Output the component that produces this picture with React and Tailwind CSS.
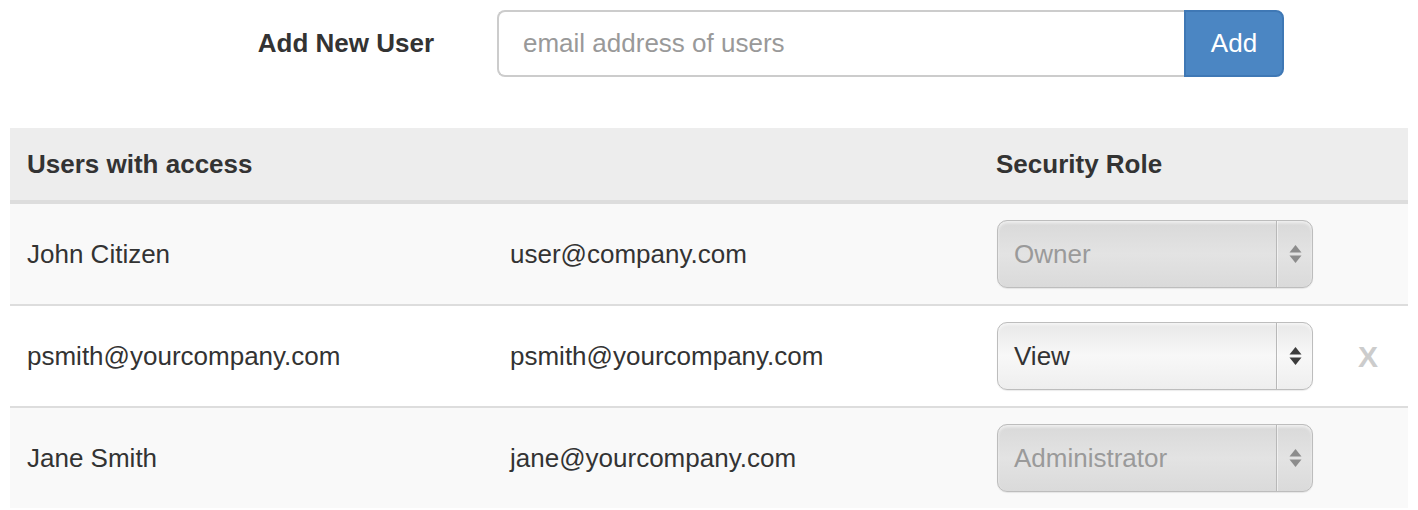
import React from 'react';

const users = [
    { name: 'John Citizen', email: 'user@company.com', role: 'Owner', disabled: true, striped: true },
    { name: 'psmith@yourcompany.com', email: 'psmith@yourcompany.com', role: 'View', disabled: false, striped: false, removable: true },
    { name: 'Jane Smith', email: 'jane@yourcompany.com', role: 'Administrator', disabled: true, striped: true },
];

// Aqua-ish select box, drawn by hand so it looks the same everywhere
const RoleSelect = ({ value, disabled }) => (
    <div
        className={`${
            disabled
                ? 'bg-linear-to-b from-[#d9d9d9] via-[#e3e3e3] to-[#dadada] text-[#9a9a9a]'
                : 'bg-linear-to-b from-[#e8e8e8] via-[#f8f8f8] to-[#eeeeee] text-[#333]'
        } flex h-[68px] w-[316px] items-stretch rounded-[10px] border border-[#bdbdbd] shadow-[inset_0_2px_3px_rgba(255,255,255,0.6),0_1px_1px_rgba(0,0,0,0.08)]`}
    >
        <div className="flex flex-1 items-center pl-4">{value}</div>
        <div className="w-px bg-[#b8b8b8]" />
        <div className="w-px bg-white/50" />
        <div className="flex w-[34px] items-center justify-center">
            <svg width="13" height="26" viewBox="0 0 13 26" className={disabled ? 'text-[#8c8c8c]' : 'text-[#3c3c3c]'}>
                <path d="M6.5 4 L12.5 11.5 L0.5 11.5 Z" fill="currentColor" />
                <path d="M0.5 14.5 L12.5 14.5 L6.5 22 Z" fill="currentColor" />
            </svg>
        </div>
    </div>
);

export default function App() {
    return (
        <div className="min-h-screen bg-white text-[26px] text-[#333]" style={{ fontFamily: '"Liberation Sans", Arial, Helvetica, sans-serif' }}>
            {/* Add new user */}
            <div className="flex items-center pt-[10px]">
                <label className="w-[434px] text-right font-bold">Add New User</label>
                <div className="ml-[63px] flex h-[67px] w-[787px]">
                    <input
                        type="text"
                        placeholder="email address of users"
                        className="h-full flex-1 rounded-l-[8px] border-2 border-r-0 border-[#cccccc] px-6 text-[#555] placeholder:text-[#999] focus:outline-none"
                    />
                    <button className="h-full w-[100px] rounded-r-[8px] border-2 border-[#3f78b5] bg-[#4b86c3] text-white">
                        Add
                    </button>
                </div>
            </div>

            {/* Users table */}
            <div className="mx-[10px] mt-[51px]">
                <div className="grid h-[76px] grid-cols-[483px_486px_351px_1fr] items-center border-b-4 border-[#dddddd] bg-[#ededed] font-bold">
                    <div className="pl-[17px]">Users with access</div>
                    <div />
                    <div className="pl-[17px]">Security Role</div>
                    <div />
                </div>
                {users.map((u, i) => (
                    <div
                        key={u.email}
                        className={`${u.striped ? 'bg-[#f9f9f9]' : 'bg-white'} ${
                            i > 0 ? 'h-[102px] border-t-2 border-[#dddddd]' : 'h-[100px]'
                        } grid grid-cols-[483px_486px_351px_1fr] items-center`}
                    >
                        <div className="pl-[17px]">{u.name}</div>
                        <div className="pl-[17px]">{u.email}</div>
                        <div className="pl-[18px]">
                            <RoleSelect value={u.role} disabled={u.disabled} />
                        </div>
                        <div className="flex justify-center pr-[2px]">
                            {u.removable && <span className="text-[30px] font-bold text-[#cccccc]">X</span>}
                        </div>
                    </div>
                ))}
            </div>
        </div>
    );
}
